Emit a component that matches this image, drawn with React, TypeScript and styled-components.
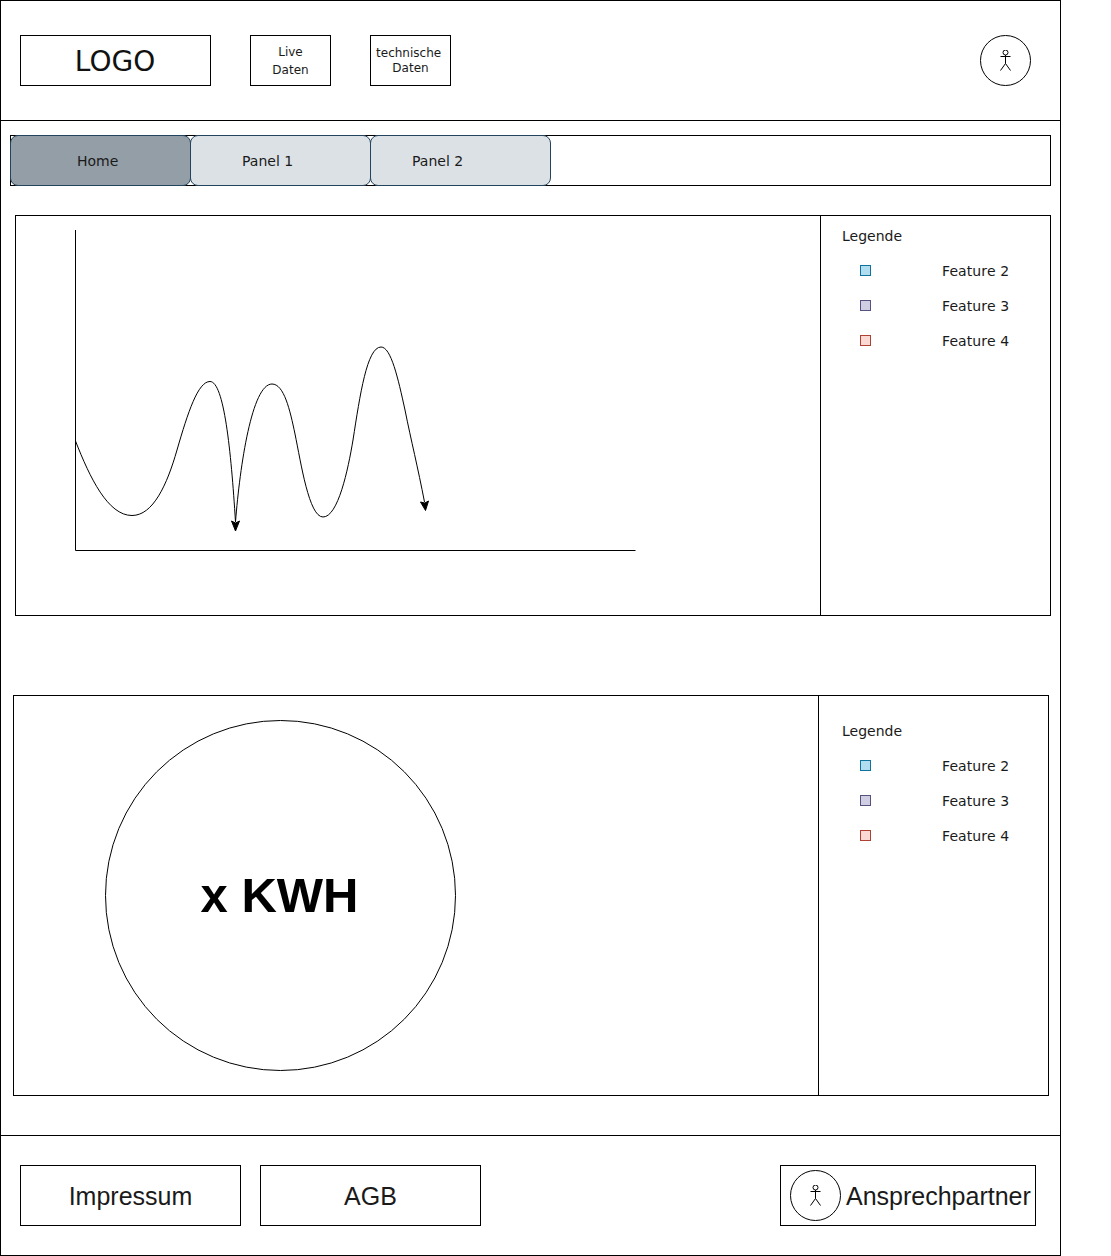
import styled, { createGlobalStyle } from "styled-components";

const GlobalStyle = createGlobalStyle`
  html, body {
    margin: 0;
    padding: 0;
    background: #fff;
  }
  * {
    box-sizing: border-box;
  }
`;

const Page = styled.div`
  width: 1061px;
  height: 1256px;
  border: 1px solid #000;
  background: #fff;
  font-family: "DejaVu Sans", sans-serif;
  color: #1a1a1a;
`;

const Header = styled.header`
  height: 120px;
  padding: 0 29px 0 19px;
  border-bottom: 1px solid #000;
  display: flex;
  align-items: center;
  gap: 39px;
`;

const LogoBox = styled.div`
  width: 191px;
  height: 51px;
  border: 1px solid #000;
  padding: 2px 1px 0 0;
  display: flex;
  align-items: center;
  justify-content: center;
  font-size: 28px;
  color: #111;
`;

const NavBox = styled.div<{ $lineHeight: number }>`
  width: 81px;
  height: 51px;
  border: 1px solid #000;
  display: flex;
  align-items: center;
  justify-content: center;
  text-align: center;
  white-space: pre;
  font-size: 12px;
  line-height: ${(p) => p.$lineHeight}px;
`;

const Avatar = styled.div<{ $push?: boolean }>`
  width: 51px;
  height: 51px;
  flex: none;
  border: 1px solid #000;
  border-radius: 50%;
  display: flex;
  align-items: center;
  justify-content: center;
  margin-left: ${(p) => (p.$push ? "auto" : "0")};
`;

const TabBar = styled.nav`
  height: 51px;
  margin: 14px 9px 0;
  border: 1px solid #000;
  display: flex;
`;

const Tab = styled.div<{ $active?: boolean; $pad: number }>`
  width: 181px;
  height: 51px;
  margin: -1px 0 -1px -1px;
  flex: none;
  border: 1px solid #23445d;
  border-radius: 8px;
  background: ${(p) => (p.$active ? "#949ea6" : "#dce1e6")};
  padding-left: ${(p) => p.$pad}px;
  display: flex;
  align-items: center;
  font-size: 14px;
`;

const Panel = styled.section<{ $top: number; $left: number }>`
  width: 1036px;
  height: 401px;
  margin-top: ${(p) => p.$top}px;
  margin-left: ${(p) => p.$left}px;
  border: 1px solid #000;
  display: flex;
`;

const ChartArea = styled.div`
  width: 804px;
  flex: none;
  display: flex;
`;

const GaugeArea = styled.div`
  width: 804px;
  flex: none;
  display: flex;
  align-items: center;
  padding-left: 91px;
`;

const Gauge = styled.div`
  width: 351px;
  height: 351px;
  border: 1px solid #000;
  border-radius: 50%;
  padding: 0 2px 2px 0;
  display: flex;
  align-items: center;
  justify-content: center;
  font-family: "Liberation Sans", Arial, sans-serif;
  font-weight: 700;
  font-size: 49px;
  color: #000;
`;

const Legend = styled.aside<{ $top: number; $left: number }>`
  flex: 1;
  border-left: 1px solid #000;
  padding-top: ${(p) => p.$top}px;
  padding-left: ${(p) => p.$left}px;
`;

const LegendTitle = styled.div`
  height: 34px;
  line-height: 35px;
  font-size: 14px;
`;

const LegendRow = styled.div<{ $indent: number }>`
  height: 35px;
  display: grid;
  grid-template-columns: 82px auto;
  align-items: center;
  padding-left: ${(p) => p.$indent}px;
  font-size: 14px;
  letter-spacing: 0.1px;
`;

const Swatch = styled.span<{ $fill: string; $line: string }>`
  width: 11px;
  height: 11px;
  background: ${(p) => p.$fill};
  border: 1px solid ${(p) => p.$line};
`;

const Footer = styled.footer`
  height: 120px;
  margin-top: 39px;
  border-top: 1px solid #000;
  padding: 0 24px 0 19px;
  display: flex;
  align-items: center;
  gap: 19px;
  font-family: "Liberation Sans", Arial, sans-serif;
  font-size: 25px;
`;

const FooterBox = styled.div`
  width: 221px;
  height: 61px;
  border: 1px solid #000;
  padding-top: 2px;
  display: flex;
  align-items: center;
  justify-content: center;
`;

const ContactBox = styled.div`
  width: 256px;
  height: 61px;
  margin-left: auto;
  border: 1px solid #000;
  padding-left: 9px;
  display: flex;
  align-items: center;
  gap: 5px;
  line-height: 31px;
`;

const ContactName = styled.span`
  padding-top: 2px;
`;

const StickFigure = () => (
  <svg width="13" height="21" viewBox="0 0 13 21" fill="none" stroke="#000" strokeWidth="1">
    <circle cx="6.5" cy="2.500" r="2.500" />
    <path d="M6.500 5V13.500M1.500 6.500H11.500M6.500 13.500L1.500 20.500M6.500 13.500L11.500 20.500" />
  </svg>
);

const Chart = () => (
  <svg width="804" height="399" viewBox="16 216 804 399" fill="none" stroke="#000" strokeWidth="1">
    <path d="M75.500 230V550.500H635.500" />
    <path d="M75.500 441C90 478 108 515.500 132 515.500C153 515.500 167 485 177 450C188 412 198 381.500 210 381.500C224 381.500 231 450 235.500 522" />
    <path d="M235.500 522C240 465 252 384 272 384C284 384 290 410 295 434C301 463 309 517 323 517C338 517 348 470 353 440C360 395 367 347 381 347C391 347 398 378 405 410C411 440 418 468 424.500 502" />
    <path d="M231.500 521L235.500 531L239.500 521L235.500 523Z" fill="#000" />
    <path d="M420.500 502L425.500 510.500L428.500 501L424.800 503Z" fill="#000" />
  </svg>
);

const legendItems = [
  { label: "Feature 2", fill: "#b1ddf0", line: "#10739e" },
  { label: "Feature 3", fill: "#d0cee2", line: "#56517e" },
  { label: "Feature 4", fill: "#fad9d5", line: "#ae4132" },
];

const LegendBlock = ({ top, left, indent }: { top: number; left: number; indent: number }) => (
  <Legend $top={top} $left={left}>
    <LegendTitle>Legende</LegendTitle>
    {legendItems.map((item) => (
      <LegendRow key={item.label} $indent={indent}>
        <Swatch $fill={item.fill} $line={item.line} />
        <span>{item.label}</span>
      </LegendRow>
    ))}
  </Legend>
);

export default function App() {
  return (
    <>
      <GlobalStyle />
      <Page>
        <Header>
          <LogoBox>LOGO</LogoBox>
          <NavBox $lineHeight={18}>{"Live\nDaten"}</NavBox>
          <NavBox $lineHeight={15}>{"technische \nDaten"}</NavBox>
          <Avatar $push>
            <StickFigure />
          </Avatar>
        </Header>

        <TabBar>
          <Tab $active $pad={66}>Home</Tab>
          <Tab $pad={51}>Panel 1</Tab>
          <Tab $pad={41}>Panel 2</Tab>
        </TabBar>

        <Panel $top={29} $left={14}>
          <ChartArea>
            <Chart />
          </ChartArea>
          <LegendBlock top={3} left={21} indent={18} />
        </Panel>

        <Panel $top={79} $left={12}>
          <GaugeArea>
            <Gauge>x KWH</Gauge>
          </GaugeArea>
          <LegendBlock top={18} left={23} indent={18} />
        </Panel>

        <Footer>
          <FooterBox>Impressum</FooterBox>
          <FooterBox>AGB</FooterBox>
          <ContactBox>
            <Avatar>
              <StickFigure />
            </Avatar>
            <ContactName>Ansprechpartner</ContactName>
          </ContactBox>
        </Footer>
      </Page>
    </>
  );
}
